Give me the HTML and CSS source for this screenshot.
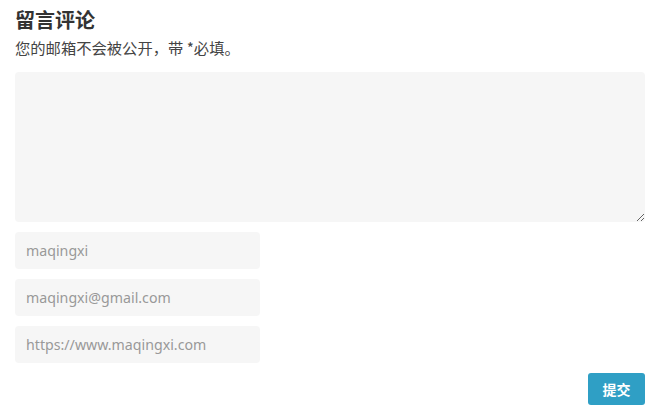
FILE: index.html
```html
<!DOCTYPE html>
<html lang="zh-CN">
<head>
<meta charset="utf-8">
<link rel="stylesheet" href="styles.css">
</head>
<body>
<div class="respond">
  <h3 class="title">留言评论</h3>
  <p class="notes">您的邮箱不会被公开，带 *必填。</p>
  <form class="form">
    <textarea class="comment"></textarea>
    <input class="field" type="text" placeholder="maqingxi">
    <input class="field" type="text" placeholder="maqingxi@gmail.com">
    <input class="field" type="text" placeholder="https://www.maqingxi.com">
    <div class="actions"><button class="submit" type="button">提交</button></div>
  </form>
</div>
</body>
</html>
```
FILE: styles.css
```css
html, body { margin: 0; padding: 0; background: #fff; }
body { font-family: "Noto Sans", "Noto Sans CJK SC", sans-serif; color: #333; }
.respond { padding: 6px 15px 0 15px; }
.title { margin: 0; font-size: 20px; line-height: 28px; font-weight: bold; color: #333; font-family: "Noto Sans CJK SC", sans-serif; }
.notes { margin: 2px 0 0 0; font-size: 15.3px; line-height: 22px; color: #444; font-family: "Noto Sans CJK SC", sans-serif; }
.form { display: flex; flex-direction: column; gap: 10px; margin-top: 14px; }
.comment { display: block; box-sizing: border-box; width: 630px; height: 150px; background: #f6f6f6; border: none; border-radius: 4px; margin: 0; resize: vertical; padding: 8px; }
.field { box-sizing: border-box; width: 245px; height: 37px; background: #f6f6f6; border: none; border-radius: 4px; padding: 0 11px; font-size: 14.2px; font-family: "Noto Sans", sans-serif; color: #555; outline: none; }
.field::placeholder { color: #999; }
.actions { display: flex; justify-content: flex-end; width: 630px; }
.submit { width: 57px; height: 32px; background: #2f9fc5; color: #fff; border: none; border-radius: 3px; font-size: 14px; font-weight: bold; font-family: "Noto Sans CJK SC", sans-serif; padding: 0; }
```
